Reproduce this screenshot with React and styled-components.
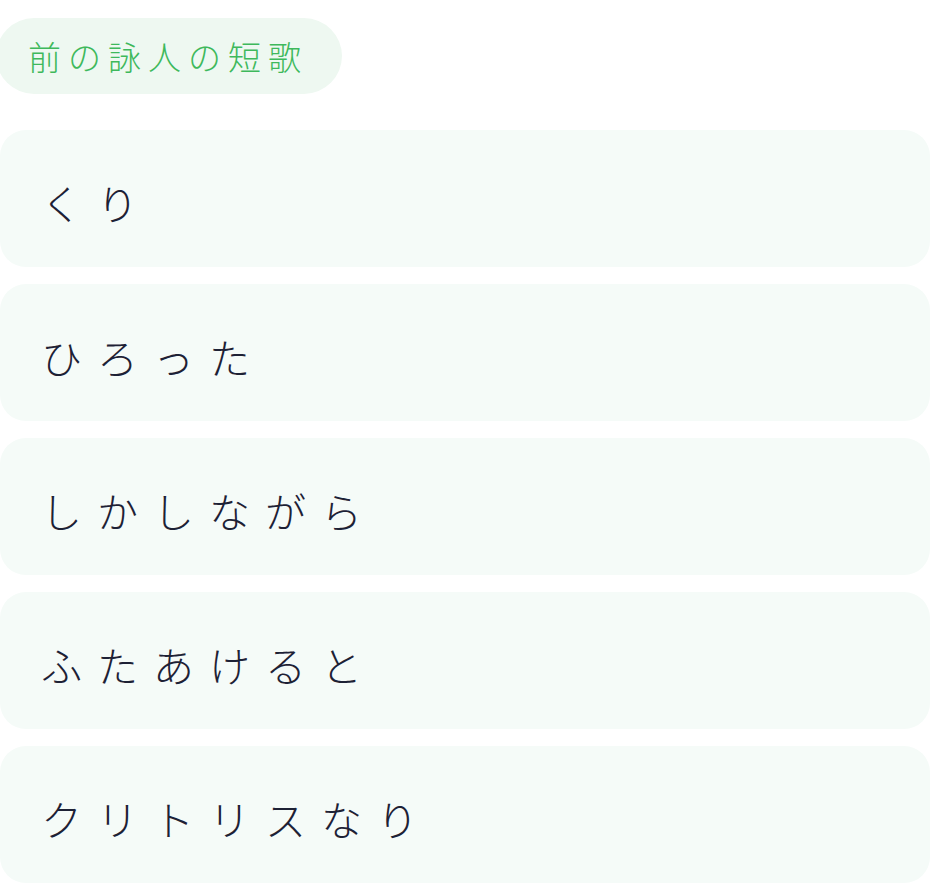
import React from 'react';
import styled, { createGlobalStyle } from 'styled-components';

const GlobalStyle = createGlobalStyle`
  body {
    margin: 0;
    background: #ffffff;
    font-family: "Noto Sans CJK JP", "Noto Sans", sans-serif;
  }
`

const Page = styled.div`
  padding: 18px 4px 8px 0;
  display: flex;
  flex-direction: column;
  align-items: flex-start;
`

const Badge = styled.div`
  height: 76px;
  padding: 0 34px 0 32px;
  margin-left: -4px;
  display: flex;
  align-items: center;
  border-radius: 38px;
  background: #eef8f1;
  color: #3eb95c;
  font-size: 33px;
  letter-spacing: 7px;
  font-weight: 300;
`

const Lines = styled.div`
  margin-top: 36px;
  width: 930px;
  display: flex;
  flex-direction: column;
  gap: 17px;
`

const Line = styled.div`
  height: 137px;
  padding-left: 41px;
  padding-top: 6px;
  box-sizing: border-box;
  display: flex;
  align-items: center;
  border-radius: 26px;
  background: #f5fbf8;
  color: #1d2135;
  font-size: 41px;
  font-weight: 300;
  letter-spacing: 15px;
`

const lines = ['くり', 'ひろった', 'しかしながら', 'ふたあけると', 'クリトリスなり']

const App = () => {
  return (
    <>
      <GlobalStyle />
      <Page>
        <Badge>前の詠人の短歌</Badge>
        <Lines>
          {lines.map(text => (
            <Line key={text}>{text}</Line>
          ))}
        </Lines>
      </Page>
    </>
  )
}

export default App
